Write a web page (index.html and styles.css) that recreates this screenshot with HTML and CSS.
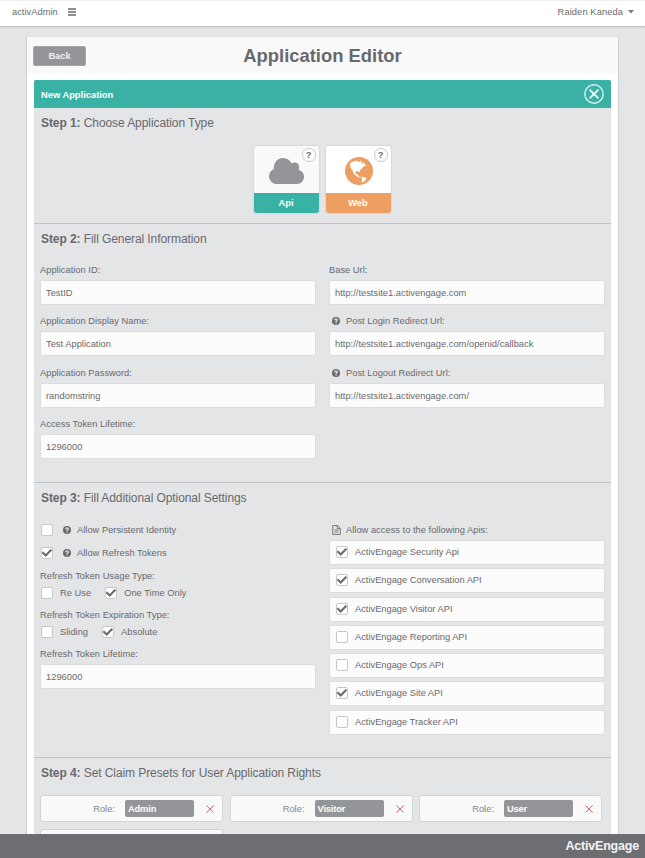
FILE: index.html
```html
<!DOCTYPE html>
<html lang="en">
<head>
<meta charset="utf-8">
<title>activAdmin - Application Editor</title>
<link rel="stylesheet" href="styles.css">
</head>
<body>
<svg class="defs" width="0" height="0">
  <symbol id="help" viewBox="0 0 8 8"><circle cx="4" cy="4" r="4" fill="#68696d"/><path d="M2.6 3.2Q2.7 1.8 4 1.8T5.4 3Q5.4 3.600 4.100 4.200V4.900" fill="none" stroke="#e4e5e7" stroke-width="1.2"/><path d="M3.500 5.500h1.200v1.200H3.500z" fill="#e4e5e7"/></symbol>
  <symbol id="check" viewBox="0 0 12 12"><path d="M1.400 5.300 4.700 8.500 10.300 2.700" fill="none" stroke="#6b6c70" stroke-width="2.200"/></symbol>
  <symbol id="cross" viewBox="0 0 8 8"><path d="M.4.4l7.200 7.200M7.600.4.4 7.600" fill="none" stroke="currentColor" stroke-width="1"/></symbol>
</svg>
<header class="topbar">
  <span class="brand">activAdmin</span>
  <svg class="menu" viewBox="0 0 8 8"><path d="M0 1h8M0 4h8M0 7h8" stroke="#68696d" stroke-width="1.4"/></svg>
  <span class="user">Raiden Kaneda</span>
  <svg class="caret" viewBox="0 0 6 4"><path d="M0 0h6L3 3.600z" fill="#77787b"/></svg>
</header>
<main class="page">
  <div class="card">
    <div class="card-head"><button class="back">Back</button><h1>Application Editor</h1></div>
    <div class="panel">
      <div class="panel-head"><span>New Application</span>
        <svg class="close" viewBox="0 0 20 20"><circle cx="10" cy="10" r="9.200" fill="none" stroke="#d6f0ec" stroke-width="1.400"/><path d="M5.600 5.600l8.800 8.800M14.400 5.600l-8.800 8.800" stroke="#fff" stroke-width="1.500"/></svg>
      </div>
      <section class="step step1">
        <h2><b>Step 1:</b> Choose Application Type</h2>
        <div class="types">
          <div class="type api">
            <div class="type-icon"><svg class="cloud" viewBox="0 0 35 26"><path d="M8 26C3.500 26 0 22.500 0 18.200C0 15 2 12.200 4.800 11C4.500 4.500 8.500 0 14 0C18 0 21 2.200 22.600 5.600C25.500 3.200 30.200 5 30.200 9.200Q30.200 10.700 29.500 11.800C32.800 12.700 35 15.500 35 18.800C35 22.800 32 26 28 26Z" fill="#949599"/></svg></div>
            <div class="type-name">Api</div><span class="hint">?</span>
          </div>
          <div class="type web">
            <div class="type-icon"><svg class="globe" viewBox="0 0 28 28"><circle cx="14" cy="14" r="14" fill="#ed9f61"/><path d="M5 6 8.500 4.500 12 3.500 13 5.500 16 3.500 17 5 15.500 6.500 19 5.500 20 7.500 21.500 8.500 18.500 9.500 17 11.500 15 13 14.500 15.500 12.500 14 10.500 14.500 11 17 13 17.500 14 20 16.500 20.500 15 21 12 19.500 9 17 7.500 13.500 5.500 10.500Z" fill="#fff"/><path d="M16.500 19.500 21.500 21 20 24 16.500 25.500 17 22.500Z" fill="#fff"/></svg></div>
            <div class="type-name">Web</div><span class="hint">?</span>
          </div>
        </div>
      </section>
      <section class="step step2">
        <h2><b>Step 2:</b> Fill General Information</h2>
        <div class="cols">
          <div class="col">
            <div class="field"><label>Application ID:</label><div class="input">TestID</div></div>
            <div class="field"><label>Application Display Name:</label><div class="input">Test Application</div></div>
            <div class="field"><label>Application Password:</label><div class="input">randomstring</div></div>
            <div class="field"><label>Access Token Lifetime:</label><div class="input">1296000</div></div>
          </div>
          <div class="col">
            <div class="field"><label>Base Url:</label><div class="input">http://testsite1.activengage.com</div></div>
            <div class="field"><label class="iconed"><svg class="help"><use href="#help"/></svg>Post Login Redirect Url:</label><div class="input">http://testsite1.activengage.com/openid/callback</div></div>
            <div class="field"><label class="iconed"><svg class="help"><use href="#help"/></svg>Post Logout Redirect Url:</label><div class="input">http://testsite1.activengage.com/</div></div>
          </div>
        </div>
      </section>
      <section class="step step3">
        <h2><b>Step 3:</b> Fill Additional Optional Settings</h2>
        <div class="cols">
          <div class="col options">
            <div class="opt"><i class="box"></i><svg class="help"><use href="#help"/></svg><span>Allow Persistent Identity</span></div>
            <div class="opt"><i class="box"><svg><use href="#check"/></svg></i><svg class="help"><use href="#help"/></svg><span>Allow Refresh Tokens</span></div>
            <label class="group">Refresh Token Usage Type:</label>
            <div class="radios"><i class="box"></i><span>Re Use</span><i class="box"><svg><use href="#check"/></svg></i><span>One Time Only</span></div>
            <label class="group">Refresh Token Expiration Type:</label>
            <div class="radios"><i class="box"></i><span>Sliding</span><i class="box"><svg><use href="#check"/></svg></i><span>Absolute</span></div>
            <div class="field"><label>Refresh Token Lifetime:</label><div class="input">1296000</div></div>
          </div>
          <div class="col apis">
            <label class="iconed"><svg class="doc" viewBox="0 0 9 10"><path d="M.7.6h5l2.600 2.500v6.300H.7zM5.300.6v3h3M2.400 5h4M2.400 7h4" fill="none" stroke="#77787b"/></svg>Allow access to the following Apis:</label>
            <div class="apirow"><i class="box"><svg><use href="#check"/></svg></i>ActivEngage Security Api</div>
            <div class="apirow"><i class="box"><svg><use href="#check"/></svg></i>ActivEngage Conversation API</div>
            <div class="apirow"><i class="box"><svg><use href="#check"/></svg></i>ActivEngage Visitor API</div>
            <div class="apirow"><i class="box"></i>ActivEngage Reporting API</div>
            <div class="apirow"><i class="box"></i>ActivEngage Ops API</div>
            <div class="apirow"><i class="box"><svg><use href="#check"/></svg></i>ActivEngage Site API</div>
            <div class="apirow"><i class="box"></i>ActivEngage Tracker API</div>
          </div>
        </div>
      </section>
      <section class="step step4">
        <h2><b>Step 4:</b> Set Claim Presets for User Application Rights</h2>
        <div class="roles">
          <div class="role"><span>Role:</span><b>Admin</b><svg><use href="#cross"/></svg></div>
          <div class="role"><span>Role:</span><b>Visitor</b><svg><use href="#cross"/></svg></div>
          <div class="role"><span>Role:</span><b>User</b><svg><use href="#cross"/></svg></div>
          <div class="role"></div>
        </div>
      </section>
    </div>
  </div>
</main>
<footer class="footer">ActivEngage</footer>
</body>
</html>
```
FILE: styles.css
```css
* { box-sizing: border-box; }
body {
  margin: 0;
  height: 858px;
  display: flex;
  flex-direction: column;
  overflow: hidden;
  background: #e4e5e7;
  color: #68696d;
  font: 9.3px/12px "Liberation Sans", Arial, sans-serif;
  letter-spacing: .02px;
}
svg { display: block; flex: none; }
.defs { position: absolute; }
h1, h2 { margin: 0; }
.topbar {
  flex: none;
  height: 26px;
  display: flex;
  align-items: center;
  padding: 0 11px 3px 12px;
  background: #fff;
  border-top: 1px solid #f0f0f1;
  box-shadow: 0 1px 2px #b5b6b8;
}
.menu { width: 8px; height: 8px; margin-left: 10px; }
.user { margin-left: auto; letter-spacing: .1px; }
.caret { width: 6px; height: 4px; margin-left: 5px; }
.page { flex: 1; min-height: 0; overflow: hidden; padding: 10px 26px 0; }
.card { width: 593px; height: 900px; background: #fff; border: 1px solid #d0d1d3; border-top-color: #e0e1e3; }
.card-head { height: 37px; display: grid; grid-template-columns: 53px 1fr 53px; align-items: center; padding: 0 6px; background: #f9f9f9; }
.back {
  height: 20px;
  padding: 0;
  border: 1px solid #a4a5a8;
  border-radius: 2px;
  background: #949599;
  color: #eee;
  font: bold 9.3px "Liberation Sans", Arial, sans-serif;
}
h1 { text-align: center; font-size: 18.4px; line-height: 24px; letter-spacing: 0; }
.panel { margin: 6px 7px 0; background: #e4e5e7; }
.panel-head {
  height: 28px;
  display: flex;
  align-items: center;
  justify-content: space-between;
  padding: 1px 7px 0;
  border-radius: 2px 2px 0 0;
  background: #39b2a5;
  color: #fff;
  font-weight: bold;
}
.close { width: 20px; height: 20px; margin-top: -2px; }
.step { padding: 7px 6px 0; border-bottom: 1px solid #c0c1c4; }
.step1 { height: 116px; }
.step2 { height: 259px; }
.step3 { height: 275px; }
.step4 { border: 0; }
h2 { padding-left: 1px; font-size: 12px; line-height: 16px; font-weight: normal; letter-spacing: -.08px; }
.types { display: flex; justify-content: center; gap: 7px; margin: 15px 0 0 -1px; }
.type { position: relative; width: 65px; height: 67px; border-radius: 3px; overflow: hidden; box-shadow: 0 0 1px 1px #d6d7d9; }
.type-icon { height: 47px; display: flex; align-items: center; justify-content: center; padding-top: 3px; background: #f9f9f9; }
.web .type-icon { background: #fff; }
.cloud { width: 35px; height: 26px; }
.globe { width: 28px; height: 28px; margin-left: 1px; }
.type-name { height: 20px; line-height: 20px; text-align: center; background: #39b2a5; color: #fff; font-weight: bold; }
.web .type-name { background: #ed9f61; }
.hint {
  position: absolute;
  top: 2px;
  right: 3px;
  width: 14px;
  height: 14px;
  border: 1px solid #c5c6c8;
  border-radius: 50%;
  background: #fff;
  font-weight: bold;
  text-align: center;
  letter-spacing: 0;
}
.cols { display: grid; grid-template-columns: 275.500px 275.500px; gap: 13.500px; }
.step2 .cols { margin-top: 17px; }
.field { height: 51.300px; }
.field label { display: block; height: 16px; }
.field label.iconed, label.iconed { display: flex; align-items: center; height: 16px; padding: 0 0 4px 3px; gap: 6px; }
.help { width: 8px; height: 8px; }
.doc { width: 9px; height: 10px; margin-right: -1px; }
.input {
  height: 25px;
  padding-left: 5px;
  line-height: 24px;
  border: 1px solid #dcdddf;
  border-radius: 2px;
  background: #fcfcfc;
}
.box { flex: none; display: block; width: 12px; height: 12px; border: 1px solid #c6c7ca; border-radius: 2px; background: #fff; }
.box svg { width: 12px; height: 12px; margin: -1px; }
.step3 .cols { margin-top: 18px; }
.opt { display: flex; align-items: center; height: 12px; margin-bottom: 11px; padding-left: 1px; }
.opt .help { margin: 0 6px 0 10px; }
.group { display: block; height: 12px; }
.radios { display: flex; align-items: center; height: 12px; padding-left: 1px; margin: 5px 0 10px; }
.radios span { margin: 0 14px 0 7px; }
.apirow {
  display: flex;
  align-items: center;
  gap: 7px;
  height: 25px;
  margin-bottom: 3.300px;
  padding: 0 0 1px 6px;
  border: 1px solid #dcdddf;
  border-radius: 2px;
  background: #fcfcfc;
  letter-spacing: 0;
}
.roles { display: grid; grid-template-columns: repeat(3, 183px); gap: 7px 6.500px; margin-top: 14px; }
.role {
  display: flex;
  align-items: center;
  justify-content: flex-end;
  height: 27px;
  padding-right: 8px;
  border: 1px solid #d3d4d6;
  border-radius: 3px;
  background: #f9f9f9;
  color: #848589;
}
.role b { width: 69px; height: 17px; margin: 0 12px 0 10px; padding-left: 3px; line-height: 18px; border-radius: 2px; background: #949599; color: #fff; letter-spacing: -.15px; }
.role svg { width: 8px; height: 8px; color: #e06666; }
.footer { position: relative; flex: none; height: 24px; padding-right: 6px; background: #6d6e72; color: #f3f3f4; font-size: 12.500px; line-height: 25px; font-weight: bold; text-align: right; letter-spacing: -.2px; }
```
